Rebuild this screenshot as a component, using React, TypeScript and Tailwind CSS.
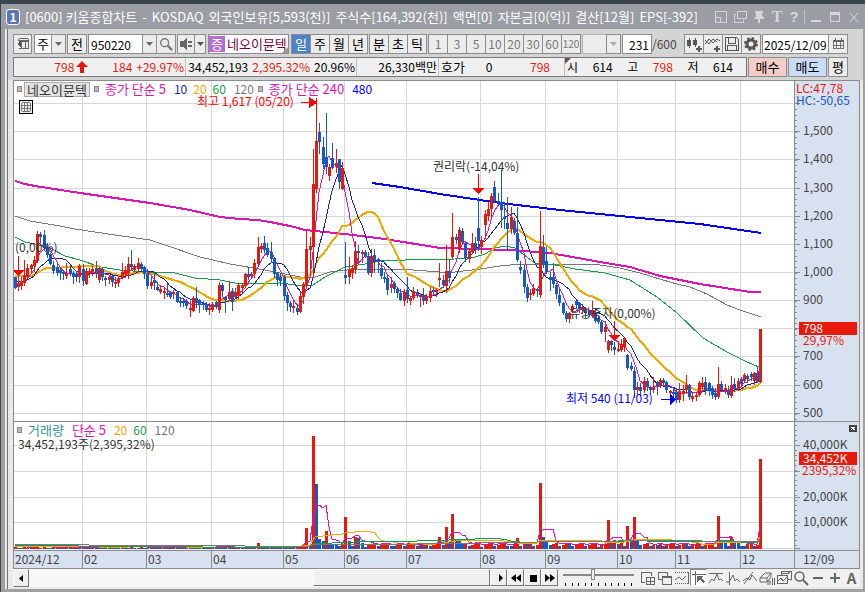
import React, { useState } from "react";

type Candle = [high: number, top: number, bottom: number, low: number, up: number];

const RED = "#e8190a";
const BLUE = "#1558c8";
const PINK = "#dc14b4";
const NAVY = "#14289b";
const GOLD = "#f0aa00";
const GREEN = "#149b46";
const GRAY = "#787878";

// daily candles in plot units: high, body top, body bottom, low, up/down
const CANDLES: Candle[] = [
  [277, 277, 288, 288, 0], [272, 283, 287, 290, 1], [277, 281, 286, 289, 1], [260, 275, 283, 285, 1],
  [264, 268, 277, 278, 1], [264, 265, 269, 272, 1], [256, 260, 266, 271, 1], [231, 234, 261, 262, 1],
  [232, 234, 237, 242, 0], [230, 235, 248, 250, 0], [243, 248, 255, 257, 0], [253, 254, 264, 264, 0],
  [261, 265, 271, 273, 0], [264, 267, 273, 275, 0], [267, 270, 273, 279, 0], [270, 272, 274, 279, 0],
  [263, 273, 276, 278, 1], [265, 269, 273, 275, 0], [271, 273, 277, 283, 0], [271, 274, 277, 281, 0],
  [264, 266, 277, 282, 1], [264, 269, 281, 285, 0], [268, 271, 284, 284, 1], [268, 271, 274, 277, 1],
  [266, 269, 272, 275, 1], [261, 268, 274, 277, 0], [267, 268, 280, 282, 1], [267, 269, 277, 280, 0],
  [276, 278, 280, 285, 0], [276, 277, 280, 283, 1], [274, 276, 282, 286, 0], [277, 282, 284, 287, 1],
  [276, 278, 283, 286, 1], [263, 272, 278, 278, 1], [266, 270, 274, 277, 1], [257, 264, 273, 278, 1],
  [250, 264, 267, 269, 0], [264, 266, 270, 271, 1], [258, 263, 269, 271, 1], [262, 264, 269, 271, 0],
  [266, 267, 274, 278, 0], [269, 274, 286, 288, 0], [277, 282, 286, 288, 1], [272, 280, 283, 289, 0],
  [282, 287, 290, 290, 0], [285, 289, 292, 293, 1], [288, 291, 293, 298, 1], [284, 293, 295, 296, 0],
  [291, 292, 297, 298, 0], [290, 292, 294, 298, 1], [292, 292, 302, 302, 0], [297, 301, 303, 306, 0],
  [298, 301, 303, 306, 0], [299, 301, 306, 308, 0], [301, 308, 310, 316, 1], [296, 298, 311, 311, 1],
  [287, 298, 303, 307, 0], [299, 300, 305, 312, 0], [301, 303, 305, 309, 0], [302, 304, 310, 311, 0],
  [303, 308, 310, 314, 1], [302, 304, 310, 311, 1], [301, 302, 307, 308, 0], [282, 285, 310, 312, 1],
  [283, 285, 291, 296, 0], [297, 297, 300, 312, 0], [281, 292, 299, 300, 1], [288, 291, 302, 310, 0],
  [288, 292, 297, 298, 1], [283, 285, 296, 298, 1], [283, 285, 288, 292, 1], [273, 274, 286, 287, 1],
  [267, 274, 277, 279, 0], [272, 274, 276, 278, 1], [259, 263, 274, 277, 1], [237, 247, 264, 266, 1],
  [243, 246, 249, 252, 1], [236, 243, 250, 252, 0], [243, 248, 255, 256, 0], [242, 252, 259, 262, 0],
  [257, 258, 274, 277, 0], [272, 273, 280, 285, 0], [273, 277, 281, 285, 0], [275, 277, 296, 300, 0],
  [292, 295, 303, 310, 0], [301, 303, 307, 311, 0], [301, 306, 308, 312, 1], [304, 308, 312, 314, 0],
  [292, 296, 312, 312, 1], [282, 284, 297, 303, 1], [229, 249, 285, 286, 1], [237, 246, 250, 273, 1],
  [149, 184, 247, 277, 1], [98, 141, 189, 192, 1], [123, 132, 142, 153, 0], [137, 147, 164, 168, 0],
  [113, 157, 167, 173, 0], [164, 167, 176, 180, 1], [143, 158, 168, 168, 0], [149, 163, 167, 172, 1],
  [159, 159, 182, 188, 0], [162, 168, 189, 189, 1], [242, 275, 278, 283, 0], [257, 270, 277, 283, 1],
  [265, 268, 273, 278, 1], [241, 251, 269, 273, 1], [245, 251, 253, 263, 0], [250, 252, 254, 262, 1],
  [250, 252, 256, 257, 0], [252, 256, 273, 274, 0], [249, 256, 273, 276, 1], [249, 255, 261, 272, 0],
  [258, 259, 262, 272, 0], [263, 268, 276, 278, 0], [272, 277, 279, 282, 0], [275, 278, 290, 294, 0],
  [277, 284, 288, 292, 1], [281, 283, 289, 292, 0], [288, 289, 293, 297, 0], [289, 293, 300, 300, 0],
  [289, 292, 301, 305, 1], [277, 290, 299, 302, 0], [297, 298, 301, 304, 1], [287, 291, 298, 299, 1],
  [289, 292, 295, 297, 0], [293, 295, 297, 306, 1], [288, 295, 301, 304, 0], [294, 297, 301, 303, 1],
  [287, 291, 298, 301, 1], [287, 290, 292, 293, 0], [288, 290, 292, 296, 1], [263, 278, 280, 286, 1],
  [275, 280, 285, 287, 0], [245, 271, 286, 292, 1], [260, 271, 278, 282, 0], [213, 237, 257, 258, 1],
  [234, 237, 240, 243, 0], [227, 230, 249, 252, 1], [228, 231, 242, 243, 0], [242, 243, 258, 261, 0],
  [248, 251, 259, 262, 1], [233, 243, 252, 253, 1], [237, 243, 250, 253, 0], [197, 228, 241, 250, 0],
  [236, 240, 247, 253, 1], [210, 214, 225, 238, 1], [202, 209, 216, 220, 1], [193, 196, 209, 216, 1],
  [181, 187, 201, 202, 0], [193, 201, 203, 205, 0], [170, 202, 210, 227, 0], [202, 217, 219, 228, 0],
  [197, 223, 229, 250, 0], [207, 217, 229, 233, 1], [218, 221, 233, 234, 0], [207, 233, 260, 261, 0],
  [261, 267, 270, 273, 0], [265, 270, 287, 292, 0], [284, 287, 298, 301, 0], [289, 293, 295, 299, 1],
  [284, 288, 294, 295, 1], [288, 289, 291, 296, 0], [211, 246, 295, 297, 1], [235, 247, 265, 267, 0],
  [247, 261, 272, 273, 0], [272, 277, 280, 290, 0], [263, 277, 284, 287, 0], [283, 285, 294, 298, 0],
  [289, 295, 303, 305, 0], [302, 303, 313, 314, 0], [311, 313, 319, 321, 0], [312, 313, 319, 322, 1],
  [304, 306, 310, 312, 1], [300, 301, 305, 307, 0], [302, 303, 309, 312, 0], [304, 307, 310, 313, 1],
  [307, 309, 313, 317, 0], [310, 311, 315, 316, 0], [301, 310, 316, 317, 1], [308, 312, 321, 322, 0],
  [317, 318, 322, 323, 0], [320, 322, 332, 333, 0], [321, 327, 332, 341, 1], [340, 341, 350, 352, 1],
  [340, 341, 345, 350, 0], [342, 347, 350, 354, 0], [341, 349, 351, 351, 1], [339, 344, 350, 351, 1],
  [337, 338, 347, 351, 1], [354, 355, 368, 369, 0], [362, 366, 369, 370, 0], [367, 371, 390, 397, 0],
  [382, 387, 390, 393, 1], [383, 387, 391, 395, 0], [377, 381, 390, 392, 1], [378, 381, 387, 390, 0],
  [386, 387, 390, 393, 0], [377, 387, 390, 392, 1], [381, 382, 386, 394, 0], [378, 380, 386, 387, 1],
  [378, 380, 383, 384, 0], [381, 382, 390, 392, 0], [390, 391, 393, 397, 1], [387, 392, 394, 397, 0],
  [388, 392, 400, 402, 0], [383, 391, 400, 402, 1], [385, 391, 394, 400, 1], [375, 385, 390, 393, 1],
  [384, 385, 397, 399, 0], [392, 396, 399, 401, 1], [392, 395, 397, 400, 1], [381, 383, 395, 396, 1],
  [377, 383, 387, 388, 1], [377, 382, 391, 394, 0], [382, 383, 390, 395, 0], [386, 388, 395, 398, 0],
  [388, 393, 397, 399, 0], [367, 384, 397, 398, 1], [381, 384, 390, 391, 0], [384, 388, 391, 393, 1],
  [386, 390, 395, 397, 0], [376, 385, 396, 397, 1], [378, 384, 389, 391, 0], [378, 381, 389, 390, 1],
  [377, 379, 384, 386, 0], [373, 375, 381, 382, 1], [374, 376, 379, 382, 0], [372, 374, 377, 380, 0],
  [372, 373, 381, 384, 1], [367, 373, 382, 382, 0], [329, 329, 382, 382, 1],
];

// bar heights for the days that stand out
const SPIKES: Record<number, number> = {
  7: 5, 33: 4, 36: 4, 63: 4, 75: 6, 90: 21, 91: 4, 92: 113, 93: 65, 94: 10, 95: 8, 96: 18, 97: 5,
  102: 32, 103: 8, 105: 12, 106: 11, 131: 12, 132: 4, 133: 22, 134: 7, 135: 35, 136: 9, 137: 8,
  155: 11, 157: 7, 162: 66, 163: 12, 164: 8, 183: 29, 184: 6, 185: 9, 189: 23, 190: 8, 191: 32,
  192: 8, 217: 33, 218: 7, 221: 12, 222: 7, 230: 90,
};

const VOLUMES = CANDLES.map((_, i) => {
  if (SPIKES[i]) return SPIKES[i];
  if (i < 88) return 1 + ((i * 7) % 3 === 0 ? 1 : 0);
  return 3 + ((i * 5) % 4) - (i % 9 === 0 ? 1 : 0);
});

const xOf = (i: number) => Math.floor(15 + i * 3.243);

const average = (values: number[], n: number, seed: number) => {
  const all = [...Array(n - 1).fill(seed), ...values];
  return values.map((_, i) => all.slice(i, i + n).reduce((a, b) => a + b, 0) / n);
};

const toPoints = (ys: number[]) => ys.map((y, i) => `${xOf(i)},${Math.round(y)}`).join(" ");

const closes = CANDLES.map(([, top, bottom, , up]) => (up ? top : bottom));
const volumeLine = (n: number, seed: number) => toPoints(average(VOLUMES, n, seed).map((v) => 548 - v));

const MA60 =
  "15,237 25,242 35,244 50,248 65,256 80,260 100,267 120,270 145,272 175,273 195,278 220,280 240,284 280,283 303,286 313,285 325,277 345,267 365,264 380,261 405,260 455,259 475,257 485,254 495,248 505,246 515,248 535,263 555,265 575,269 605,273 630,280 657,297 677,313 703,338 727,352 745,361 761,368";
const MA120 =
  "15,216 30,221 60,226 75,229 115,235 150,240 165,245 200,257 230,264 265,270 300,277 315,277 330,272 355,269 400,269 440,272 455,272 480,269 500,266 520,264 600,265 620,268 640,273 663,280 677,284 690,287 707,294 727,305 740,310 761,317";
const MA240 =
  "15,181 25,184 35,186 80,193 150,203 190,210 220,217 240,219 258,220 270,222 290,226 305,230 345,234 385,239 440,248 475,249 510,250 550,253 600,262 630,267 660,276 680,280 700,284 725,288 750,292 761,292";
const MA480 = "372,183 400,187 440,194 500,203 560,210 620,216 700,224 761,233";

const MONTHS = [
  { label: "2024/12", width: 69 },
  { label: "02", width: 64 },
  { label: "03", width: 65 },
  { label: "04", width: 72 },
  { label: "05", width: 61 },
  { label: "06", width: 62 },
  { label: "07", width: 74 },
  { label: "08", width: 65 },
  { label: "09", width: 72 },
  { label: "10", width: 58 },
  { label: "11", width: 65 },
  { label: "12", width: 53 },
];
const GRID_X = [82, 146, 211, 283, 344, 406, 480, 545, 617, 675, 740];
const PRICE_Y = [103, 131, 159, 188, 216, 244, 272, 300, 328, 356, 385, 413];
const PRICE_LABELS = ["", "1,500", "1,400", "1,300", "1,200", "1,100", "1,000", "900", "", "700", "600", "500"];

const TITLE = [
  "[0600] 키움종합차트",
  "-",
  "KOSDAQ",
  "외국인보유[5,593(천)]",
  "주식수[164,392(천)]",
  "액면[0]",
  "자본금[0(억)]",
  "결산[12월]",
  "EPS[-392]",
];

const Caret = () => (
  <svg width="7" height="4" viewBox="0 0 7 4" fill="currentColor">
    <path d="M0 0h7L3.500 4z" />
  </svg>
);

const Icon = ({ children, size = 16 }: { children: React.ReactNode; size?: number }) => (
  <svg
    width={size}
    height={size}
    viewBox="0 0 16 16"
    fill="none"
    stroke="currentColor"
    strokeWidth="1"
    shapeRendering="crispEdges"
    className="shrink-0"
  >
    {children}
  </svg>
);

const box = "h-5 shrink-0 flex items-center justify-center border border-[#8c8c8c] bg-[#ececec]";

const TitleBar = () => (
  <header className="flex h-[25px] items-center bg-[#9a9da3] pl-[5px] pr-[3px] text-[13px] text-white">
    <span className="mr-[5px] flex h-4 w-[14px] shrink-0 items-center justify-center rounded-[3px] border border-white bg-[#5b76b5] text-[12px] font-bold leading-none">
      1
    </span>
    <h1 className="flex min-w-0 flex-1 gap-[5px] whitespace-nowrap">
      {TITLE.map((part) => (
        <span key={part}>{part}</span>
      ))}
    </h1>
    <div className="flex shrink-0 items-center gap-[3px] text-[#d5d6d8]">
      <button aria-label="축소">
        <Icon>
          <path d="M2 2h12v12H8v-1h5V3H3v5H2z" fill="currentColor" stroke="none" />
          <path d="M2.500 8.500h5v5h-5z" />
        </Icon>
      </button>
      <button aria-label="복사">
        <Icon>
          <path d="M5.500 2.500h9v7h-9zM4 5.500H2.500v8h9V11" />
        </Icon>
      </button>
      <button aria-label="고정">
        <Icon>
          <path d="M4 2h8v2h-1v3l2 2v1H3V9l2-2V4H4zM7 10h2v4H7z" fill="currentColor" stroke="none" />
        </Icon>
      </button>
      <button aria-label="글꼴" className="w-[14px] font-['Liberation_Serif',serif] text-[16px] font-bold leading-none">T</button>
      <button aria-label="도움말" className="w-[14px] font-['Liberation_Sans',sans-serif] text-[15px] font-bold leading-none">?</button>
      <span className="h-[14px] w-px bg-[#c0c2c5]" />
      <button aria-label="최소화">
        <Icon>
          <path d="M3 11h10v2H3z" fill="currentColor" stroke="none" />
        </Icon>
      </button>
      <button aria-label="최대화">
        <Icon>
          <path d="M3 3h10v10H3zm1 3v6h8V6z" fill="currentColor" fillRule="evenodd" stroke="none" />
        </Icon>
      </button>
      <button aria-label="닫기">
        <Icon>
          <path d="M4 4l8 9M12 4l-8 9" shapeRendering="auto" />
        </Icon>
      </button>
    </div>
  </header>
);

const Toolbar = () => {
  const [period, setPeriod] = useState("일");
  const [code, setCode] = useState("950220");

  return (
    <div className="flex items-center text-[13px] text-black">
      <button aria-label="패널" className={`${box} mr-[2px] w-[19px] text-[#555]`}>
        <Icon size={14}>
          <path d="M3 3.500h11v10H3M3 2h11v3H3zM10.500 4v9M6.500 4v9" />
          <path d="M1 8l5-4v8z" fill="currentColor" stroke="none" />
        </Icon>
      </button>
      <div className="mr-px flex">
        <select aria-label="종목구분" className="h-5 w-[18px] appearance-none border border-[#8c8c8c] bg-white pl-[2px]">
          <option>주</option>
        </select>
        <span className={`${box} -ml-px w-[15px] text-[#666]`}><Caret /></span>
      </div>
      <button className={`${box} mr-px w-5`}>전</button>
      <input
        aria-label="종목코드"
        value={code}
        onChange={(e) => setCode(e.target.value)}
        className="h-5 w-[55px] border border-[#8c8c8c] bg-white pl-[2px] text-[12px]"
      />
      <button aria-label="종목 목록" className={`${box} -ml-px w-[15px] text-[#666]`}><Caret /></button>
      <button aria-label="검색" className={`${box} -ml-px mr-px w-5 text-[#777]`}>
        <Icon size={14}>
          <g shapeRendering="auto">
            <circle cx="6.500" cy="6.500" r="4.500" strokeWidth="1.600" />
            <path d="M10 10l5 5" strokeWidth="2.600" />
          </g>
        </Icon>
      </button>
      <button aria-label="소리" className={`${box} w-[18px] text-[#666]`}>
        <Icon size={14}>
          <path d="M1 5h3l5-4v14l-5-4H1zM10 5h2v2h-2zM13 5h2v2h-2zM10 9h2v2h-2zM13 9h2v2h-2z" fill="currentColor" stroke="none" />
        </Icon>
      </button>
      <button aria-label="소리 설정" className={`${box} -ml-px mr-[2px] w-3 text-[#555]`}><Caret /></button>
      <div className="relative mr-[2px] flex h-5 w-[81px] shrink-0 items-center border border-[#8c8c8c] bg-white whitespace-nowrap text-[#78003c]">
        <span className="mr-[2px] flex h-4 w-4 items-center justify-center bg-[#b46ed2] text-white">증</span>
        네오이뮨텍
        <span className="absolute bottom-0 right-0 border-[3px] border-transparent border-b-[#999] border-r-[#999]" />
      </div>
      <div className="mr-[2px] flex">
        {["일", "주", "월", "년"].map((p) => (
          <button
            key={p}
            onClick={() => setPeriod(p)}
            className={`-mr-px flex h-5 w-5 items-center justify-center border border-[#8c8c8c] ${
              period === p ? "bg-[#4b82c8] text-white" : "bg-[#ececec]"
            }`}
          >
            {p}
          </button>
        ))}
      </div>
      <div className="mr-[2px] flex">
        {["분", "초", "틱"].map((p) => (
          <button key={p} onClick={() => setPeriod(p)} className={`${box} -mr-px w-5`}>{p}</button>
        ))}
      </div>
      <div className="mr-[2px] flex text-[12px] tracking-normal text-[#777]">
        {["1", "3", "5", "10", "20", "30", "60"].map((n) => (
          <button key={n} className={`${box} -mr-px w-5`}>{n}</button>
        ))}
        <button className={`${box} -mr-px w-5 text-[10px]`}>120</button>
      </div>
      <div className="mr-px flex">
        <select aria-label="사용자 주기" disabled className="h-5 w-[25px] appearance-none border border-[#b4b4b4] bg-[#ececec]">
          <option></option>
        </select>
        <span className={`${box} -ml-px w-[15px] text-[#aaa]`}><Caret /></span>
      </div>
      <input
        aria-label="표시 개수"
        defaultValue="231"
        className="h-5 w-[30px] border border-[#8c8c8c] bg-white pr-[2px] text-right text-[12px]"
      />
      <span className="flex-1 text-[12px] text-[#444]">/600</span>
      <div className="mr-px flex text-[#555]">
        <button aria-label="캔들 추가" className={`${box} -mr-px w-5`}>
          <Icon>
            <path d="M1 4h4v6H1zM2.500 2h1v10h-1zM7 4h4v5H7zM8.500 2h1v9h-1zM10 12h6v2h-6zM12 10h2v6h-2z" fill="currentColor" stroke="none" />
          </Icon>
        </button>
        <button aria-label="지표 추가" className={`${box} -mr-px w-5`}>
          <Icon>
            <path d="M0 8l4-5 4 4 4-4 3 2M0 4l4 4 4-5 4 3" shapeRendering="auto" />
            <path d="M9 12h6v2H9zM11 10h2v6h-2z" fill="currentColor" stroke="none" />
          </Icon>
        </button>
        <button aria-label="저장" className={`${box} -mr-px w-5`}>
          <Icon>
            <path d="M1.500 1.500h11l2 2v11h-13zM4.500 2v5h7V2M3.500 14V9.500h9V14" />
          </Icon>
        </button>
        <button aria-label="설정" className={`${box} w-5`}>
          <Icon>
            <g shapeRendering="auto">
              <circle cx="8" cy="8" r="4" strokeWidth="3" />
              <circle cx="8" cy="8" r="6" strokeWidth="2" strokeDasharray="2.400 2.310" />
            </g>
          </Icon>
        </button>
      </div>
      <input
        aria-label="날짜"
        defaultValue="2025/12/09"
        className="h-5 w-[67px] border border-[#8c8c8c] bg-white pl-px text-[12px]"
      />
      <button aria-label="달력" className={`${box} -ml-px w-5 text-[#666]`}>
        <Icon size={14}>
          <path d="M2.500 3.500h12v10h-12zM3 9.500h11M6.500 6v7M10.500 6v7" />
          <path d="M2 3h13v3H2zM4 1h2v2H4zM11 1h2v2h-2z" fill="currentColor" stroke="none" />
        </Icon>
      </button>
    </div>
  );
};

const QuoteRow = () => (
  <div className="flex h-5 text-black">
    <dl className="flex flex-1 border border-[#787878] bg-[#f0f0f0] [&>*]:flex [&>*]:items-center [&>*]:whitespace-nowrap">
      <div className="w-[172px] justify-end gap-1 border-r border-[#c0c0c0] pr-px text-[#e8190a]">
        <dd>798</dd>
        <svg width="12" height="12" viewBox="0 0 12 12" fill="currentColor" className="-ml-[2px] mr-5">
          <path d="M6 0l6 6H8v6H4V6H0z" />
        </svg>
        <dd>184</dd>
        <dd>+29.97%</dd>
      </div>
      <div className="w-[171px] justify-end gap-1 border-r border-[#c0c0c0] pr-px">
        <dd>34,452,193</dd>
        <dd className="text-[#e8190a]">2,395.32%</dd>
        <dd>20.96%</dd>
      </div>
      <dd className="w-[82px] justify-end border-r border-[#c0c0c0] pr-px">26,330백만</dd>
      <div className="w-[126px] border-r border-[#c0c0c0] pl-[2px]">
        <dt className="w-[42px] text-[13px]">호가</dt>
        <dd className="w-3 text-center">0</dd>
        <dd className="flex-1 pr-[14px] text-right text-[#e8190a]">798</dd>
      </div>
      <div className="relative flex-1 justify-between pl-[2px] pr-[13px]">
        <span className="absolute left-0 top-0 border-[3px] border-transparent border-l-[#555] border-t-[#555]" />
        <dt>시</dt>
        <dd>614</dd>
        <dt>고</dt>
        <dd className="text-[#e8190a]">798</dd>
        <dt>저</dt>
        <dd>614</dd>
      </div>
    </dl>
    <button className="ml-px w-[39px] border border-[#8c8c8c] bg-[#f5cdc8] text-[13px]">매수</button>
    <button className="ml-px w-[39px] border border-[#8c8c8c] bg-[#c8dcf5] text-[13px]">매도</button>
    <button className={`${box} ml-px mr-3 w-5 text-[13px]`}>평</button>
  </div>
);

const Grid = ({ ys, top, height }: { ys: number[]; top: number; height: number }) => (
  <g fill="#d7d7d7">
    {GRID_X.map((x) => (
      <rect key={x} x={x} y={top} width="1" height={height} />
    ))}
    {ys.map((y) => (
      <rect key={y} x="14" y={y} width="779" height="1" />
    ))}
  </g>
);

const PricePlot = () => (
  <svg
    viewBox="14 81 780 340"
    preserveAspectRatio="none"
    shapeRendering="crispEdges"
    className="block h-[340px] w-full"
    role="img"
    aria-label="네오이뮨텍 일봉"
  >
    <Grid ys={PRICE_Y} top={81} height={340} />
    <g fill="none">
      <polyline points={MA120} stroke={GRAY} />
      <polyline points={MA60} stroke={GREEN} />
      <polyline points={MA240} stroke={PINK} strokeWidth="2" />
      <polyline points={MA480} stroke="#0000ff" strokeWidth="2" />
      <polyline points={toPoints(average(closes, 20, 275))} stroke={GOLD} strokeWidth="2" />
      <polyline points={toPoints(average(closes, 10, 280))} stroke={NAVY} />
      <polyline points={toPoints(average(closes, 5, 283))} stroke={PINK} />
    </g>
    {CANDLES.map(([high, top, bottom, low, up], i) => (
      <g key={i} fill={up ? RED : BLUE}>
        <rect x={xOf(i)} y={high} width="1" height={low - high + 1} />
        <rect x={xOf(i) - 1} y={top} width="3" height={bottom - top} />
      </g>
    ))}
    <g fill="#ff0000">
      <path d="M301 102h8v-5l8 5.500-8 5.500v-5h-8z" />
      <path d="M18 256h1v14h5l-5.500 6-5.500-6h5z" />
      <path d="M478 174h1v14h5l-5.500 6-5.500-6h5z" />
      <path d="M614 321h1v14h5l-5.500 6-5.500-6h5z" />
    </g>
    <path d="M661 399h9v-5l6 5.500-6 5.500v-5h-9z" fill="#0000ff" />
    <g fill="#333">
      <text x="15" y="252">(0,00%)</text>
      <text x="433" y="171">권리락(-14,04%)</text>
      <text x="569" y="318">유상증자(0,00%)</text>
    </g>
    <text x="197" y="106" fill="#ff0000">최고 1,617 (05/20)</text>
    <text x="566" y="403" fill="#0000ff">최저 540 (11/03)</text>
  </svg>
);

const VolumePlot = () => (
  <svg
    viewBox="14 422 780 128"
    preserveAspectRatio="none"
    shapeRendering="crispEdges"
    className="block h-32 w-full"
    role="img"
    aria-label="거래량"
  >
    <Grid ys={[445, 471, 497, 522, 548]} top={422} height={128} />
    {VOLUMES.map((v, i) => (
      <rect
        key={i}
        x={xOf(i) - 1}
        y={549 - v}
        width="3"
        height={v}
        fill={v > (VOLUMES[i - 1] ?? 0) ? RED : BLUE}
      />
    ))}
    <g fill="none">
      <polyline points={volumeLine(5, 2)} stroke={PINK} />
      <polyline points={volumeLine(20, 2)} stroke={GOLD} />
      <polyline points={volumeLine(60, 3)} stroke={GREEN} />
      <polyline points={volumeLine(120, 4)} stroke={GRAY} />
    </g>
  </svg>
);

const PriceAxis = () => (
  <svg viewBox="795 81 64 340" shapeRendering="crispEdges" className="block h-[340px] w-16 overflow-visible" fill="#444">
    {Array.from({ length: 56 }, (_, i) => (
      <rect key={i} x="795" y={Math.round(109 + i * 5.640)} width="2" height="1" fill="#8c8c8c" />
    ))}
    {PRICE_Y.map((y, i) => (
      <g key={y}>
        <rect x="795" y={y} width="5" height="1" fill="#8c8c8c" />
        <text x="803" y={y + 4}>{PRICE_LABELS[i]}</text>
      </g>
    ))}
    <text x="796" y="93" fill={RED}>LC:47,78</text>
    <text x="796" y="105" fill={BLUE}>HC:-50,65</text>
    <rect x="799" y="322" width="58" height="13" fill={RED} />
    <text x="803" y="333" fill="#fff">798</text>
    <text x="803" y="345" fill={RED}>29,97%</text>
  </svg>
);

const VolumeAxis = () => (
  <svg viewBox="795 422 64 128" shapeRendering="crispEdges" className="block h-32 w-16 overflow-visible" fill="#444">
    {Array.from({ length: 25 }, (_, i) => (
      <rect key={i} x="795" y={425 + i * 5} width="2" height="1" fill="#8c8c8c" />
    ))}
    {[445, 471, 497, 522, 548].map((y) => (
      <rect key={y} x="795" y={y} width="5" height="1" fill="#8c8c8c" />
    ))}
    <text x="803" y="449">40,000K</text>
    <text x="803" y="501">20,000K</text>
    <text x="803" y="526">10,000K</text>
    <text x="802" y="475" fill={RED}>2395,32%</text>
    <rect x="799" y="452" width="58" height="13" fill={RED} />
    <text x="803" y="463" fill="#fff">34,452K</text>
    <rect x="849" y="425" width="8" height="7" fill="#444" />
    <path d="M851 427l4 3M855 427l-4 3" stroke="#fff" />
  </svg>
);

const Marker = () => <span className="h-[6px] w-[5px] shrink-0 border border-[#888] bg-[#bbb]" />;

const tool = "flex h-[17px] w-[17px] items-center justify-center";
const bevel = "border border-l-white border-t-white border-b-[#777] border-r-[#777]";

const BottomBar = () => (
  <div className="flex h-[18px] items-stretch bg-[#f0f0f0] text-black">
    <button aria-label="왼쪽" className={`flex w-4 items-center justify-center ${bevel}`}>
      <svg width="4" height="7" viewBox="0 0 4 7"><path d="M4 0v7L0 3.500z" /></svg>
    </button>
    <div className="flex flex-1 justify-end bg-[#f7f7f7]">
      <div className={`h-[17px] w-[177px] bg-[#f0f0f0] ${bevel}`} />
    </div>
    {[
      ["재생", "M6 2v8l4-4z"],
      ["뒤로", "M6 2v8L1 6zM11 2v8L6 6z"],
      ["정지", "M3 3h7v7H3z"],
      ["앞으로", "M1 2v8l5-4zM6 2v8l5-4z"],
    ].map(([name, d]) => (
      <button key={name} aria-label={name} className={`flex h-[17px] w-[17px] items-center justify-center ${bevel}`}>
        <svg width="12" height="12" viewBox="0 0 12 12"><path d={d} /></svg>
      </button>
    ))}
    <div className="mx-[5px] w-[71px]">
      <input
        type="range"
        aria-label="확대"
        defaultValue={42}
        className="block h-[11px] w-full appearance-none bg-[linear-gradient(#888,#888)] bg-[length:100%_2px] bg-[position:0_5px] bg-no-repeat [&::-webkit-slider-thumb]:h-[11px] [&::-webkit-slider-thumb]:w-1 [&::-webkit-slider-thumb]:appearance-none [&::-webkit-slider-thumb]:border [&::-webkit-slider-thumb]:border-[#888] [&::-webkit-slider-thumb]:bg-[#f0f0f0]"
      />
      <div className="mt-[3px] flex justify-between px-[2px]">
        {Array.from({ length: 11 }, (_, i) => (
          <span key={i} className="h-[3px] w-px bg-black" />
        ))}
      </div>
    </div>
    <div className="flex text-[#666]">
      <button aria-label="창 추가" className={tool}>
        <Icon><path d="M5 12.500H1.500v-10h10V6M6.500 7.500h8v7h-8zM10.500 8v6M7 11h7" /></Icon>
      </button>
      <button aria-label="창 복사" className={tool}>
        <Icon><path d="M5 9.500H1.500v-7h9V6M5.500 6.500h9v8h-9zM6 7.500h8" /></Icon>
      </button>
      <button aria-label="지표 영역" className={tool}>
        <Icon><path d="M1 2.500h14M1 13.500h14" strokeDasharray="1 1" /><path d="M1 10l4-3 3 3 4-4M14.500 2v12" shapeRendering="auto" /></Icon>
      </button>
      <button aria-label="십자선" className={`${tool} border border-b-white border-r-white border-l-[#888] border-t-[#888] bg-white`}>
        <Icon><path d="M1 4.500h14M4.500 1v14" /><path d="M6 6h6l-2 2 4 4-2 1-3-3-3 2z" fill="currentColor" stroke="none" /></Icon>
      </button>
      <button aria-label="수평선" className={tool}>
        <Icon><path d="M1 3.500h14" /><path d="M1 13l3-4 2 2 3-7 2 6 2-1 2 2" shapeRendering="auto" /></Icon>
      </button>
      <button aria-label="수직선" className={tool}>
        <Icon><path d="M4.500 2v13" /><path d="M1 12h3l4-7 2 6 2-2 3 3" shapeRendering="auto" /></Icon>
      </button>
      <button aria-label="추세선" className={tool}>
        <Icon><path d="M2 14L11 2M1 11l4-3 3 2 2-5 5 6" shapeRendering="auto" /></Icon>
      </button>
      <button aria-label="모두 지우기" className={tool}>
        <Icon><path d="M1 8l5-5h6l-4 5zM1 8v4h7l4-5V3M8 8v4M9 15v-4h2v4M13.500 8v7M15.500 8v7" shapeRendering="auto" /></Icon>
      </button>
      <button aria-label="차트 겹치기" className={tool}>
        <Icon><path d="M5 5.500v-4h10v8h-3M1.500 5.500h10v8h-10zM2 11l3-3 2 3 4-4M6 4l3-1 2 1 3-2" /></Icon>
      </button>
      <button aria-label="돋보기" className={tool}>
        <Icon><g shapeRendering="auto"><circle cx="6.500" cy="6.500" r="4.500" strokeWidth="1.500" /><path d="M10 10l5 5" strokeWidth="2" /></g></Icon>
      </button>
      <button aria-label="축소" className={tool}>
        <Icon><path d="M3 7h10v2H3z" fill="currentColor" stroke="none" /></Icon>
      </button>
      <button aria-label="확대" className={tool}>
        <Icon><path d="M3 7h10v2H3zM7 3h2v10H7z" fill="currentColor" stroke="none" /></Icon>
      </button>
      <button aria-label="글자" className={`${tool} text-[15px] font-bold`}>A</button>
    </div>
  </div>
);

export default function App() {
  return (
    <div className="border-l border-t-4 border-[#3b454e] bg-[#a0a0a0] pb-[3px] font-['Noto_Sans_CJK_KR',sans-serif] text-[12px] leading-4">
      <TitleBar />
      <main className="ml-1 mr-[2px] bg-[#e8e8e8] pl-[2px]">
        <div className="border-l border-[#707070]">
          <div className="flex flex-col gap-[3px] bg-[#d4d4d4] pb-[3px] pl-[5px] pr-[3px] pt-[5px]">
            <div className="pr-3"><Toolbar /></div>
            <QuoteRow />
          </div>
          <div className="pb-[2px] pl-[5px] pr-[3px]">
            <div className="border border-b-0 border-[#8c8c8c] bg-white">
              <section className="flex border-b border-[#8c8c8c]">
                <div className="relative flex-1">
                  <PricePlot />
                  <div className="absolute left-[3px] top-0 flex h-4 items-center whitespace-nowrap leading-[14px]">
                    <Marker />
                    <button className="ml-[2px] mr-1 h-[15px] w-[66px] border border-[#aaa] bg-[#e4e4e4] text-[13px] leading-none text-[#333]">네오이뮨텍</button>
                    <Marker />
                    <span className="ml-[6px] text-[13px] text-[#dc14b4]">종가 단순 5</span>
                    <span className="ml-2 text-[#14289b]">10</span>
                    <span className="ml-[6px] text-[#f0aa00]">20</span>
                    <span className="ml-[6px] text-[#149b46]">60</span>
                    <span className="ml-2 mr-1 text-[#787878]">120</span>
                    <Marker />
                    <span className="ml-[6px] text-[13px] text-[#dc14b4]">종가 단순 240</span>
                    <span className="ml-2 text-[#0000ff]">480</span>
                  </div>
                  <button aria-label="표 보기" className="absolute left-[5px] top-[19px] flex h-[14px] w-[14px] items-center justify-center border border-black bg-[#ececec] text-[#555]">
                    <Icon size={12}><path d="M2.500 2.500h11v11h-11zM3 5.500h11M3 9.500h11M6.500 3v11M10.500 3v11" /></Icon>
                  </button>
                </div>
                <div className="border-l border-[#8c8c8c] bg-[#d7e1f0]"><PriceAxis /></div>
              </section>
              <section className="flex border-b border-[#8c8c8c]">
                <div className="relative flex-1">
                  <VolumePlot />
                  <div className="absolute left-[3px] top-0 whitespace-nowrap leading-[14px]">
                    <div className="flex h-[15px] items-center">
                      <Marker />
                      <span className="ml-[6px] text-[13px] text-[#329696]">거래량</span>
                      <span className="ml-2 text-[13px] text-[#dc14b4]">단순 5</span>
                      <span className="ml-2 text-[#f0aa00]">20</span>
                      <span className="ml-[6px] text-[#149b46]">60</span>
                      <span className="ml-2 text-[#787878]">120</span>
                    </div>
                    <p className="pl-px text-[#333]">34,452,193주(2,395,32%)</p>
                  </div>
                </div>
                <div className="border-l border-[#8c8c8c] bg-[#d7e1f0]"><VolumeAxis /></div>
              </section>
              <div className="flex h-[18px] border-b border-[#8c8c8c] bg-[#d7e1f0] text-[#444]">
                <div className="flex min-w-0 flex-1">
                  {MONTHS.map((m) => (
                    <span
                      key={m.label}
                      style={{ width: `${(m.width / 780) * 100}%` }}
                      className="shrink-0 border-r border-[#8c8c8c] pl-px last:border-r-0"
                    >
                      {m.label}
                    </span>
                  ))}
                </div>
                <span className="w-[65px] border-l border-[#8c8c8c] pl-2">12/09</span>
              </div>
            </div>
            <BottomBar />
          </div>
        </div>
      </main>
    </div>
  );
}
